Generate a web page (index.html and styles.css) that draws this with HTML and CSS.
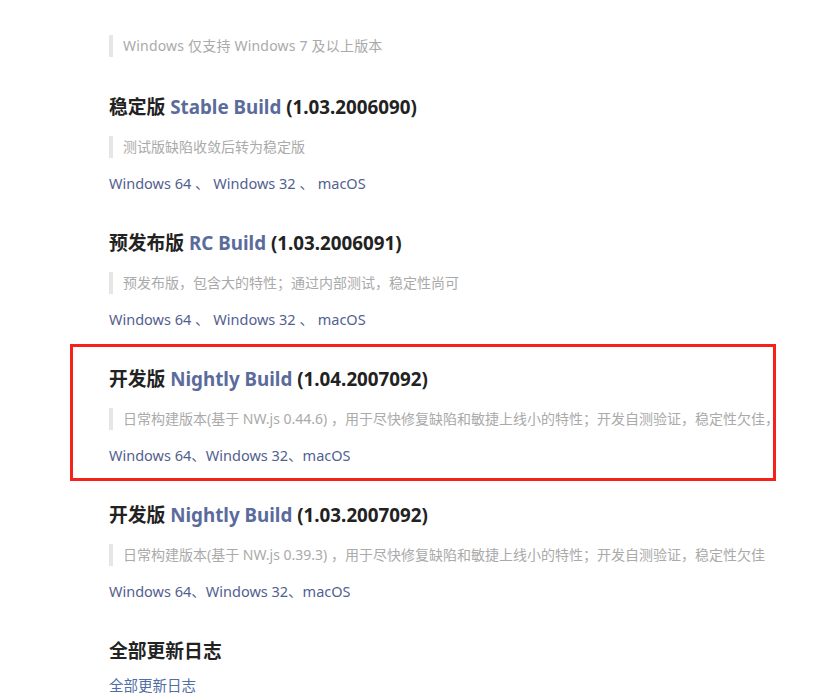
FILE: index.html
```html
<!DOCTYPE html>
<html lang="zh-CN">
<head>
    <meta charset="UTF-8">
    <meta name="viewport" content="width=device-width, initial-scale=1.0">
    <title>下载</title>
    <link rel="stylesheet" href="styles.css">
</head>
<body>
    <div class="content">
        <blockquote class="note first-note">Windows 仅支持 Windows 7 及以上版本</blockquote>

        <div class="release">
            <h3>稳定版 <a href="#">Stable Build</a> (1.03.2006090)</h3>
            <blockquote class="note">测试版缺陷收敛后转为稳定版</blockquote>
            <p class="links"><a href="#">Windows 64</a> 、 <a href="#">Windows 32</a> 、 <a href="#">macOS</a></p>
        </div>

        <div class="release">
            <h3>预发布版 <a href="#">RC Build</a> (1.03.2006091)</h3>
            <blockquote class="note">预发布版，包含大的特性；通过内部测试，稳定性尚可</blockquote>
            <p class="links"><a href="#">Windows 64</a> 、 <a href="#">Windows 32</a> 、 <a href="#">macOS</a></p>
        </div>

        <div class="release marked">
            <h3>开发版 <a href="#">Nightly Build</a> (1.04.2007092)</h3>
            <blockquote class="note">日常构建版本(基于 NW.js 0.44.6) ，用于尽快修复缺陷和敏捷上线小的特性；开发自测验证，稳定性欠佳，用于尝鲜</blockquote>
            <p class="links"><a href="#">Windows 64</a>、<a href="#">Windows 32</a>、<a href="#">macOS</a></p>
        </div>

        <div class="release">
            <h3>开发版 <a href="#">Nightly Build</a> (1.03.2007092)</h3>
            <blockquote class="note">日常构建版本(基于 NW.js 0.39.3) ，用于尽快修复缺陷和敏捷上线小的特性；开发自测验证，稳定性欠佳</blockquote>
            <p class="links"><a href="#">Windows 64</a>、<a href="#">Windows 32</a>、<a href="#">macOS</a></p>
        </div>

        <div class="release">
            <h3>全部更新日志</h3>
            <p class="links changelog"><a href="#">全部更新日志</a></p>
        </div>
    </div>
</body>
</html>
```

FILE: styles.css
```css
* {
    margin: 0;
    padding: 0;
    box-sizing: border-box;
}

body {
    font-family: "Noto Sans", "Noto Sans CJK SC", sans-serif;
    background: #fff;
    color: #222;
    overflow: hidden;
}

a {
    text-decoration: none;
    color: #52618f;
}

.content {
    padding: 35px 0 0 109px;
}

.note {
    border-left: 4px solid #e6e6e6;
    padding-left: 10px;
    font-size: 14px;
    line-height: 22px;
    color: #aaa;
    white-space: nowrap;
}

.first-note {
    margin-bottom: 38px;
    letter-spacing: 0.2px;
}

.release {
    margin-bottom: 36px;
}

.release h3 {
    font-size: 18.8px;
    line-height: 24px;
    font-weight: 700;
    color: #222;
}

.release h3 a {
    color: #5a6b9c;
}

.release .note {
    margin-top: 17px;
}

.links {
    margin-top: 13px;
    font-size: 14.5px;
    line-height: 24px;
    color: #52618f;
}

.changelog {
    margin-top: 10px;
}

.changelog a {
    color: #4f6ea5;
}

/* highlighted release */
.release.marked {
    width: 706px;
    margin: -23px 0 22px -39px;
    padding: 20px 0 11px 36px;
    border: 3px solid #f5211b;
    overflow: hidden;
}
```
